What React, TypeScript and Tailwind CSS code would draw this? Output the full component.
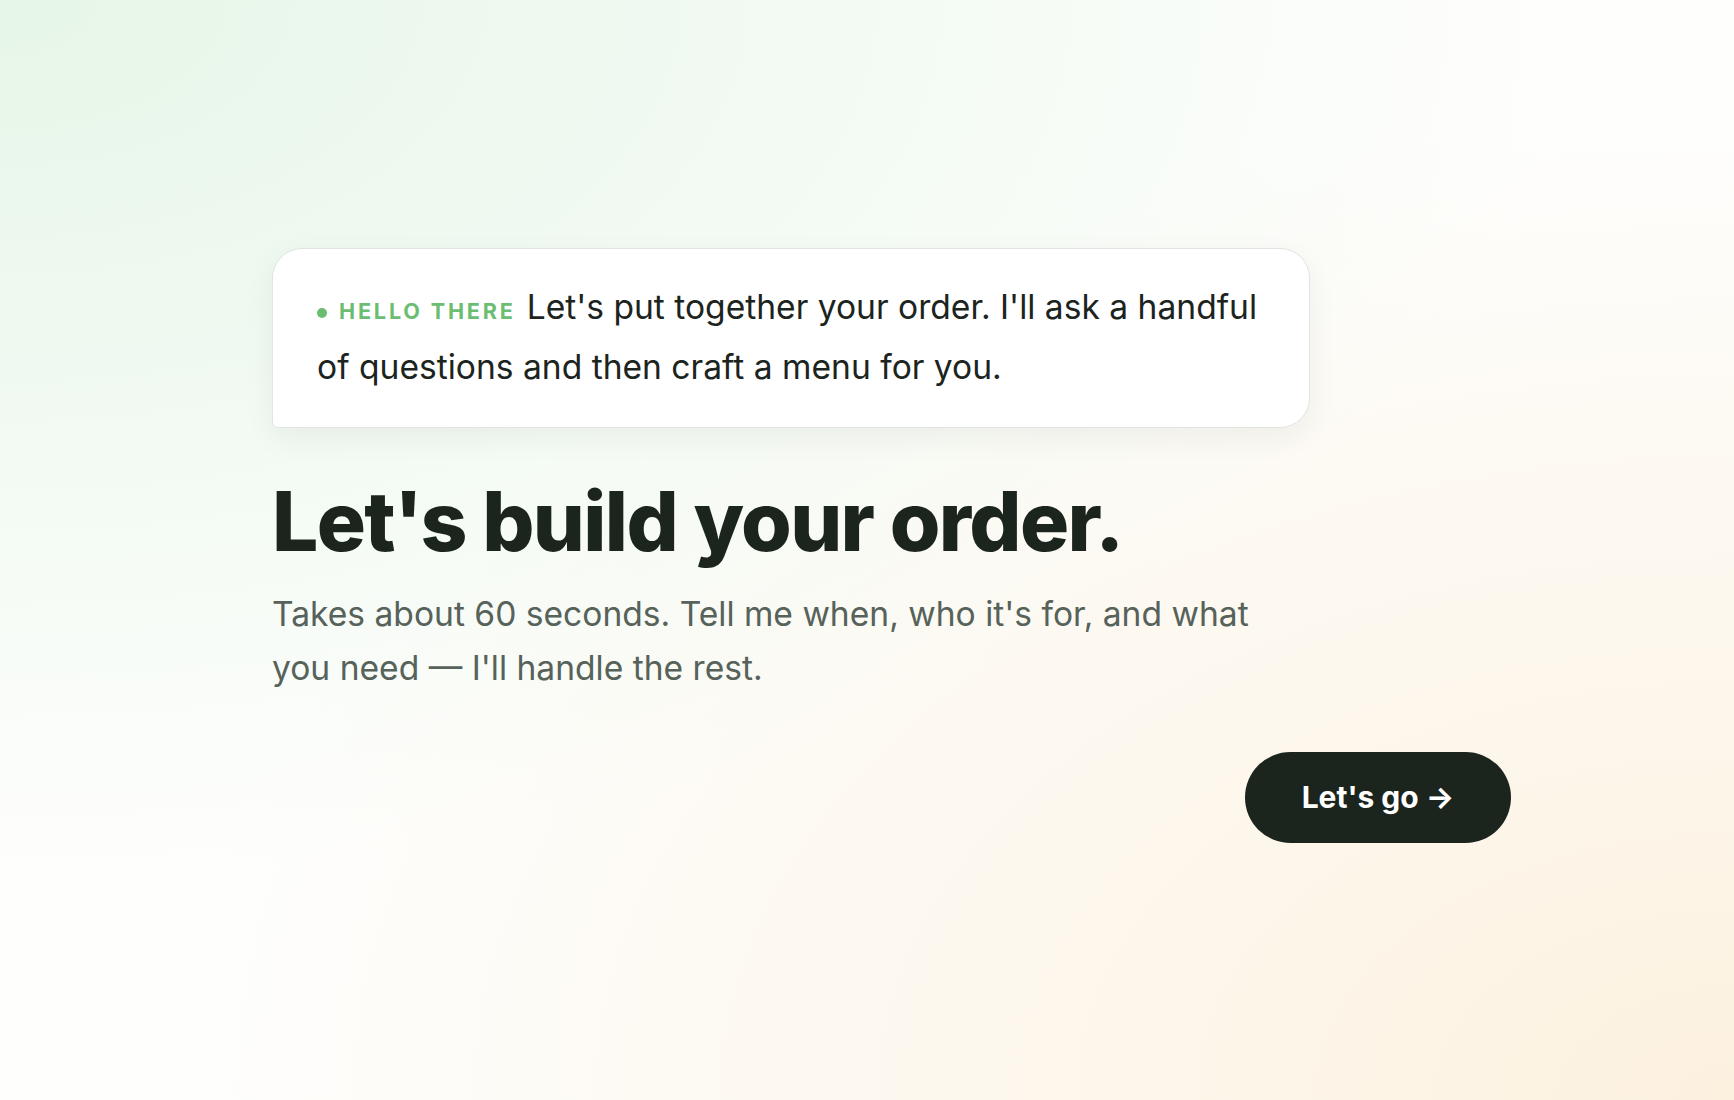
export default function App() {
  return (
    <div className="min-h-screen w-full flex items-center bg-[radial-gradient(ellipse_90%_80%_at_0%_0%,#e6f6e8_0%,rgba(255,255,255,0)_100%),radial-gradient(ellipse_90%_90%_at_100%_100%,#fcf1df_0%,rgba(255,255,255,0)_100%),linear-gradient(#fefefd,#fefefd)] font-['Inter',sans-serif]">
      <div className="ml-[272px] mb-[10px] w-[1239px] flex flex-col">
        {/* Greeting bubble */}
        <div className="w-[1038px] bg-white border border-[#e2e4e1] rounded-[30px] rounded-bl-[6px] pl-[44px] pr-[26px] pt-[28px] pb-[30px] shadow-[0_10px_30px_rgba(30,40,30,0.06)]">
          <p className="text-[33.6px] leading-[60px] text-[#1c241e]">
            <span className="inline-block w-[10px] h-[10px] rounded-full bg-[#6bbd72] mr-[12px] align-[1px]" />
            <span className="text-[21.6px] leading-none font-bold tracking-[0.13em] text-[#6bbd72] mr-[11px]">HELLO THERE</span>
            Let's put together your order. I'll ask a handful of questions and then craft a menu for you.
          </p>
        </div>

        <h1 className="mt-[53px] text-[82px] leading-none font-extrabold tracking-[-0.02em] text-[#1c241e]">
          Let's build your order.
        </h1>

        <p className="mt-[24px] max-w-[1010px] text-[33.6px] leading-[54px] text-[#56625a]">
          Takes about 60 seconds. Tell me when, who it's for, and what you need — I'll handle the rest.
        </p>

        <div className="mt-[57px] flex justify-end">
          <button className="h-[91px] w-[266px] rounded-full bg-[#1c241e] text-white text-[30px] font-bold flex items-center justify-center">
            Let's go →
          </button>
        </div>
      </div>
    </div>
  );
}
